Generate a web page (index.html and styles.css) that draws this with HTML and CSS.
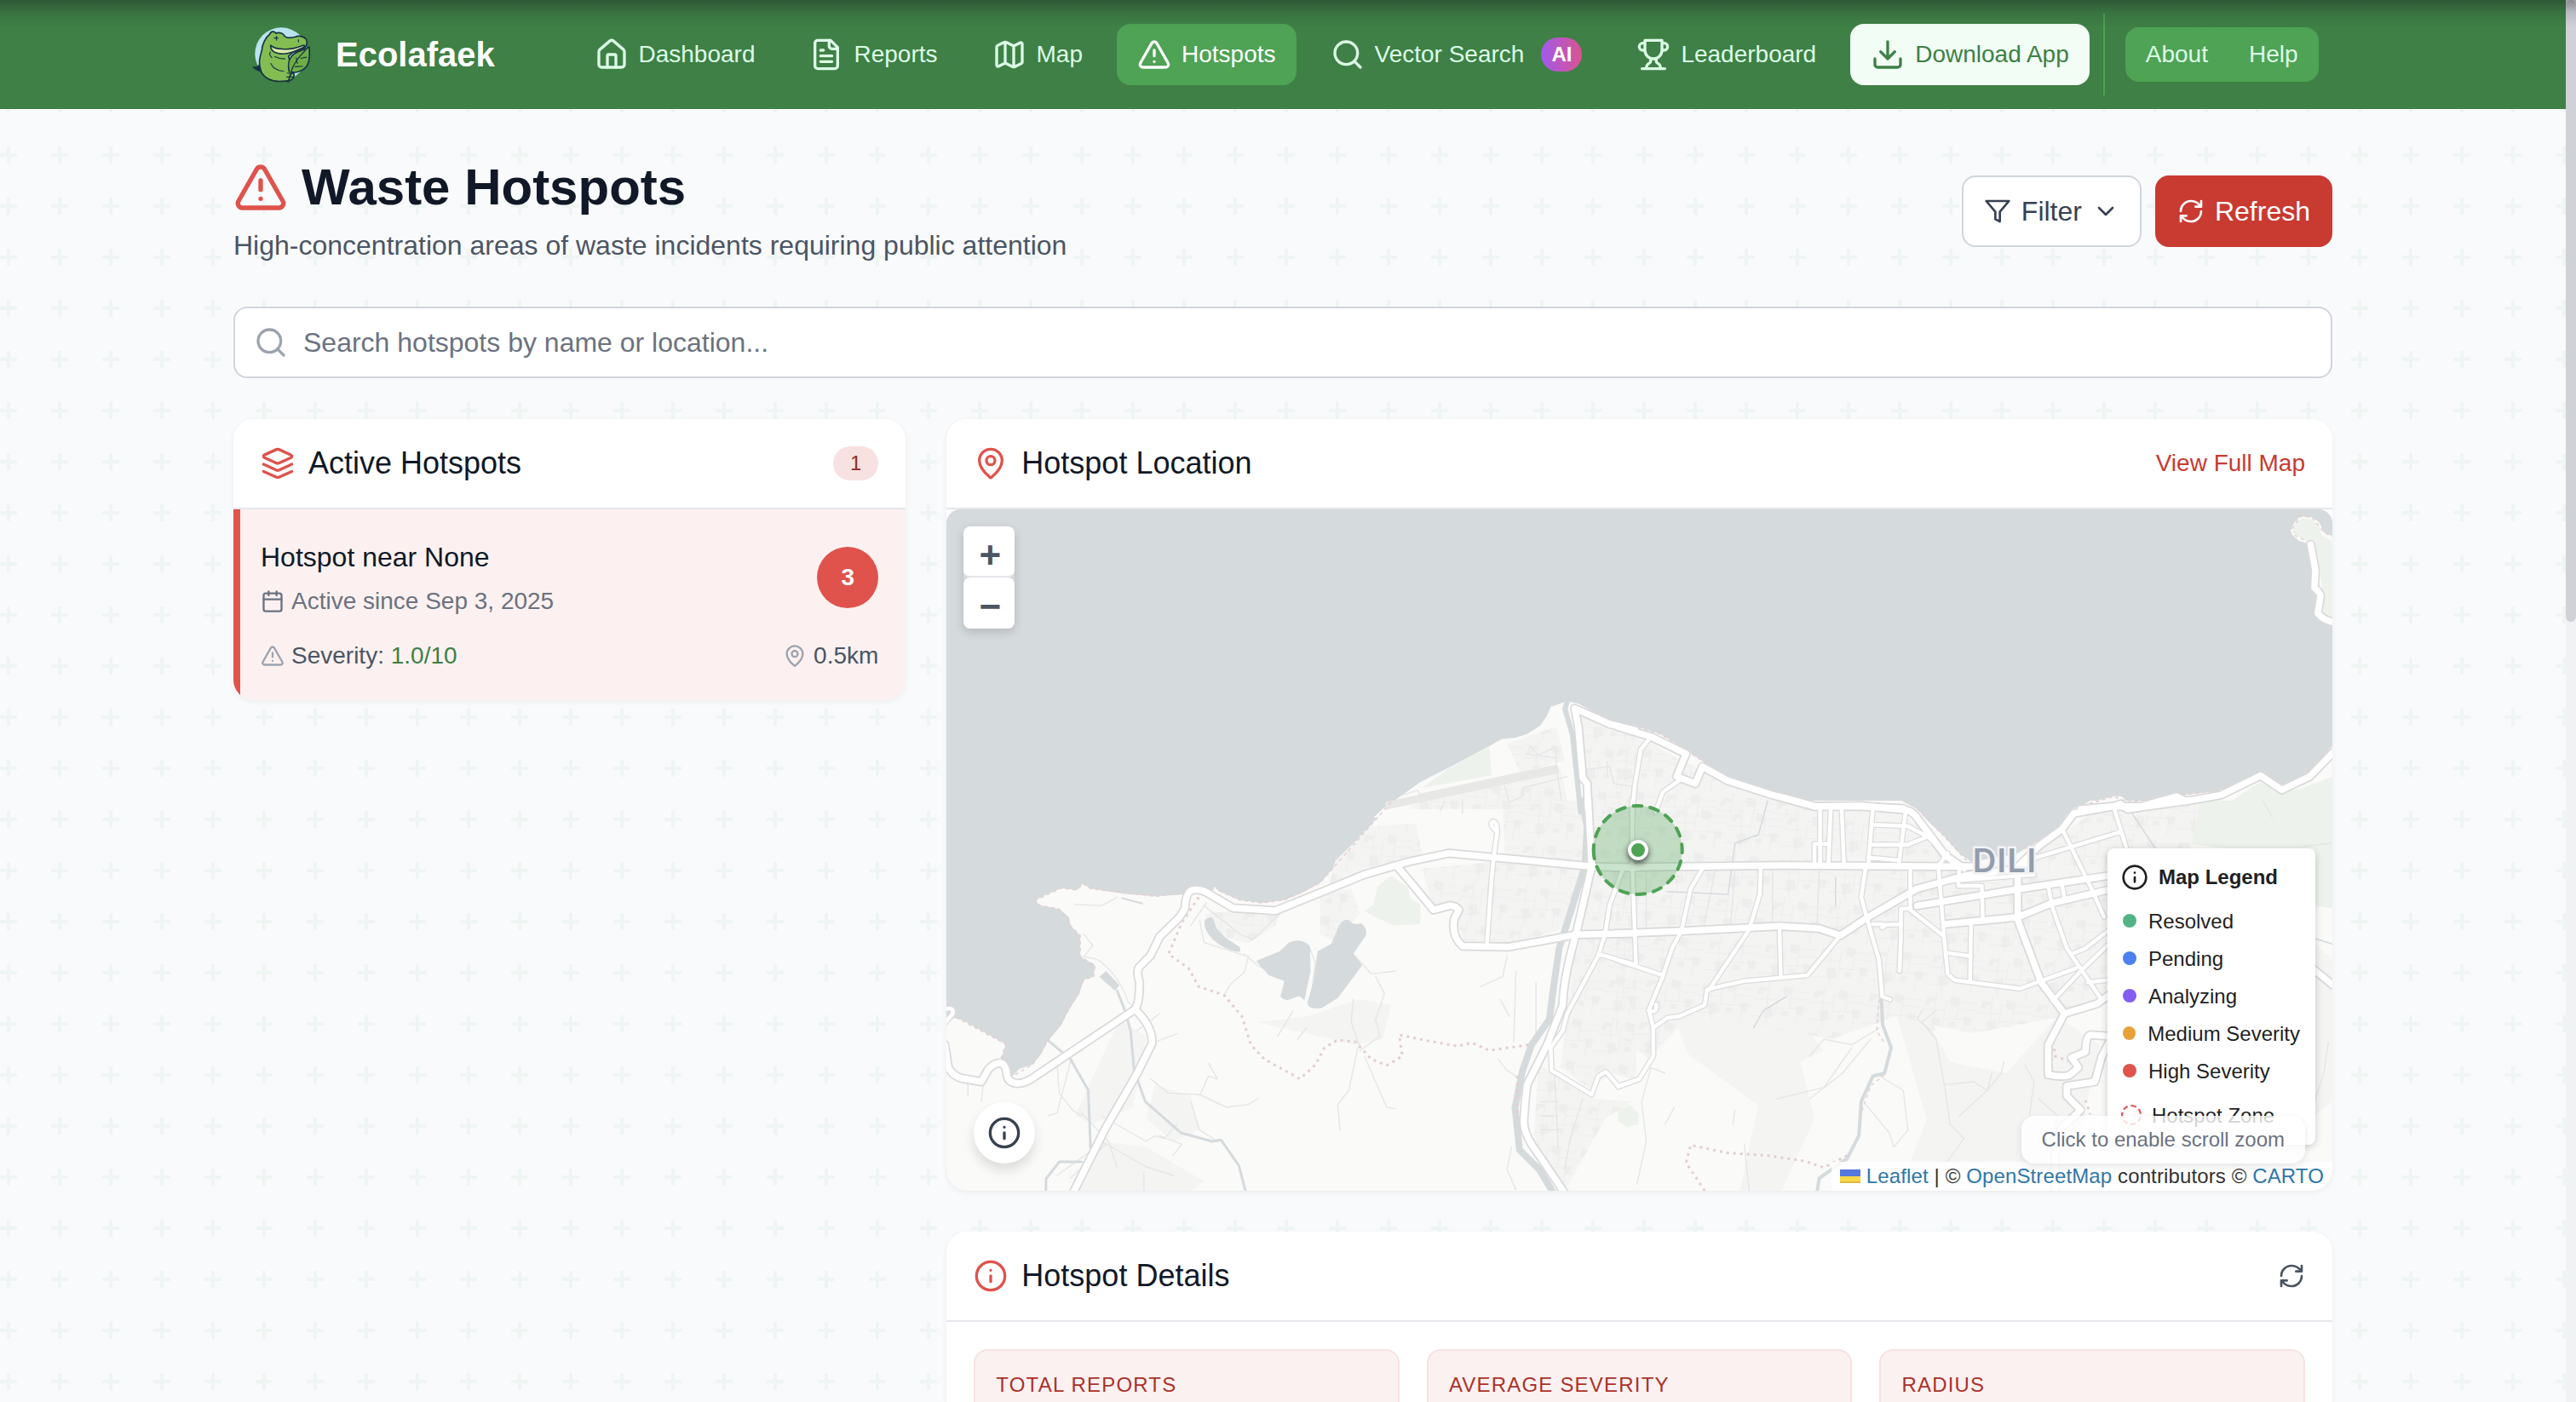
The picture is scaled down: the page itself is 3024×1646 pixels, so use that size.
FILE: index.html
```html
<!DOCTYPE html>
<html lang="en">
<head>
<meta charset="utf-8">
<title>Ecolafaek - Waste Hotspots</title>
<link rel="stylesheet" href="styles.css">
</head>
<body>
<svg class="sprite" aria-hidden="true">
  <symbol id="i-home" viewBox="0 0 24 24"><path d="M15 21v-8a1 1 0 0 0-1-1h-4a1 1 0 0 0-1 1v8"/><path d="M3 10a2 2 0 0 1 .709-1.528l7-5.999a2 2 0 0 1 2.582 0l7 5.999A2 2 0 0 1 21 10v9a2 2 0 0 1-2 2H5a2 2 0 0 1-2-2z"/></symbol>
  <symbol id="i-file" viewBox="0 0 24 24"><path d="M15 2H6a2 2 0 0 0-2 2v16a2 2 0 0 0 2 2h12a2 2 0 0 0 2-2V7Z"/><path d="M14 2v4a2 2 0 0 0 2 2h4M10 9H8M16 13H8M16 17H8"/></symbol>
  <symbol id="i-map" viewBox="0 0 24 24"><path d="M14.106 5.553a2 2 0 0 0 1.788 0l3.659-1.83A1 1 0 0 1 21 4.619v12.764a1 1 0 0 1-.553.894l-4.553 2.277a2 2 0 0 1-1.788 0l-4.212-2.106a2 2 0 0 0-1.788 0l-3.659 1.83A1 1 0 0 1 3 19.381V6.618a1 1 0 0 1 .553-.894l4.553-2.277a2 2 0 0 1 1.788 0zM15 5.764v15M9 3.236v15"/></symbol>
  <symbol id="i-alert" viewBox="0 0 24 24"><path d="m21.73 18-8-14a2 2 0 0 0-3.48 0l-8 14A2 2 0 0 0 4 21h16a2 2 0 0 0 1.73-3M12 9v4M12 17h.01"/></symbol>
  <symbol id="i-search" viewBox="0 0 24 24"><circle cx="11" cy="11" r="8"/><path d="m21 21-4.3-4.3"/></symbol>
  <symbol id="i-trophy" viewBox="0 0 24 24"><path d="M6 9H4.5a2.5 2.5 0 0 1 0-5H6M18 9h1.500a2.500 2.500 0 0 0 0-5H18M4 22h16M10 14.660V17c0 .550-.470.980-.970 1.210C7.850 18.750 7 20.240 7 22M14 14.660V17c0 .550.470.980.970 1.210C16.150 18.750 17 20.240 17 22M18 2H6v7a6 6 0 0 0 12 0V2Z"/></symbol>
  <symbol id="i-download" viewBox="0 0 24 24"><path d="M21 15v4a2 2 0 0 1-2 2H5a2 2 0 0 1-2-2v-4M7 10l5 5 5-5M12 15V3"/></symbol>
  <symbol id="i-filter" viewBox="0 0 24 24"><path d="M22 3H2l8 9.460V19l4 2v-8.540L22 3z"/></symbol>
  <symbol id="i-chevron" viewBox="0 0 24 24"><path d="m6 9 6 6 6-6"/></symbol>
  <symbol id="i-refresh" viewBox="0 0 24 24"><path d="M3 12a9 9 0 0 1 9-9 9.750 9.750 0 0 1 6.740 2.740L21 8M21 3v5h-5M21 12a9 9 0 0 1-9 9 9.750 9.750 0 0 1-6.740-2.740L3 16M8 16H3v5"/></symbol>
  <symbol id="i-layers" viewBox="0 0 24 24"><path d="m12.830 2.180a2 2 0 0 0-1.660 0L2.600 6.080a1 1 0 0 0 0 1.830l8.580 3.910a2 2 0 0 0 1.660 0l8.580-3.900a1 1 0 0 0 0-1.830ZM22 17.650l-9.170 4.160a2 2 0 0 1-1.660 0L2 17.650M22 12.650l-9.170 4.160a2 2 0 0 1-1.660 0L2 12.650"/></symbol>
  <symbol id="i-pin" viewBox="0 0 24 24"><path d="M20 10c0 4.993-5.539 10.193-7.399 11.799a1 1 0 0 1-1.202 0C9.539 20.193 4 14.993 4 10a8 8 0 0 1 16 0"/><circle cx="12" cy="10" r="3"/></symbol>
  <symbol id="i-calendar" viewBox="0 0 24 24"><path d="M8 2v4M16 2v4M3 10h18"/><rect x="3" y="4" width="18" height="18" rx="2"/></symbol>
  <symbol id="i-info" viewBox="0 0 24 24"><circle cx="12" cy="12" r="10"/><path d="M12 16v-4M12 8h.01"/></symbol>
</svg>

<header class="topbar">
  <div class="topbar-inner">
    <div class="brand">
      <svg class="brand-logo" viewBox="40 50 220 220">
        <circle cx="149" cy="156" r="93" fill="#b9e3ef"/>
        <path class="ink body" d="M50 203q15 4 22-8c-2-20 4-35 8-50 1-22 14-48 28-58 4-12 18-12 23-3 8-6 26-2 30 10 10 8 24 6 38 2 10-6 30-2 38 8 6 12 2 26-6 32l-42 16-14 12c6 20 2 34 4 48 12 4 18 14 14 26-4 14-20 14-38 15-36 3-64-10-78-34-8-3-18-7-27-16z"/>
        <path fill="#163244" d="M50 203q14 4 24-9l7 27q-18-4-31-18z"/>
        <path class="ink belly" d="M112 126c-2 16 10 28 36 30 26 2 52-10 82-24 4-8 0-6-6-5-26 11-48 14-70 12-18-1-32-2-42-13z"/>
        <path class="ink leaf" d="M178 222c-8-28-2-54 20-68 18-10 34-12 50-22 2 24 2 46-6 62-10 20-38 32-56 26l-14 38"/>
        <path class="line" d="M236 142c-20 20-44 48-52 76M206 190l-4-20M198 202l26-2M218 172l20-4M110 150c-4 6 0 14 6 20M112 190c8 18 24 26 46 28M126 166c12 6 24 8 36 8M170 224l22 2M168 238l22 0M132 94v14M124 100h14M210 106v8"/>
      </svg>
      <span class="brand-name">Ecolafaek</span>
    </div>
    <nav class="nav">
      <a class="nav-item"><svg class="ico ico-40"><use href="#i-home"/></svg>Dashboard</a>
      <a class="nav-item"><svg class="ico ico-40"><use href="#i-file"/></svg>Reports</a>
      <a class="nav-item"><svg class="ico ico-40"><use href="#i-map"/></svg>Map</a>
      <a class="nav-item active"><svg class="ico ico-40"><use href="#i-alert"/></svg>Hotspots</a>
      <a class="nav-item"><svg class="ico ico-40"><use href="#i-search"/></svg>Vector Search<span class="ai-badge">AI</span></a>
      <a class="nav-item"><svg class="ico ico-40"><use href="#i-trophy"/></svg>Leaderboard</a>
      <a class="nav-item download"><svg class="ico ico-40"><use href="#i-download"/></svg>Download App</a>
    </nav>
    <div class="nav-divider"></div>
    <div class="nav-secondary"><a>About</a><a>Help</a></div>
  </div>
</header>

<main class="page">
  <section class="page-head">
    <div>
      <h1><svg class="ico ico-64 red"><use href="#i-alert"/></svg>Waste Hotspots</h1>
      <p class="subtitle">High-concentration areas of waste incidents requiring public attention</p>
    </div>
    <div class="actions">
      <button class="btn btn-outline"><svg class="ico ico-32"><use href="#i-filter"/></svg>Filter<svg class="ico ico-32"><use href="#i-chevron"/></svg></button>
      <button class="btn btn-red"><svg class="ico ico-32"><use href="#i-refresh"/></svg>Refresh</button>
    </div>
  </section>

  <div class="search"><svg class="ico ico-40"><use href="#i-search"/></svg><span>Search hotspots by name or location...</span></div>

  <div class="columns">
    <section class="card">
      <div class="card-head">
        <h2><svg class="ico ico-40 red"><use href="#i-layers"/></svg>Active Hotspots</h2>
        <span class="count">1</span>
      </div>
      <div class="hotspot">
        <div class="hotspot-top">
          <div>
            <h3>Hotspot near None</h3>
            <p class="since"><svg class="ico ico-28"><use href="#i-calendar"/></svg>Active since Sep 3, 2025</p>
          </div>
          <span class="bubble">3</span>
        </div>
        <div class="hotspot-meta">
          <span class="meta"><svg class="ico ico-28"><use href="#i-alert"/></svg><span>Severity: <b>1.0/10</b></span></span>
          <span class="meta"><svg class="ico ico-28"><use href="#i-pin"/></svg>0.5km</span>
        </div>
      </div>
    </section>

    <div class="right-col">
      <section class="card">
        <div class="card-head">
          <h2><svg class="ico ico-40 red"><use href="#i-pin"/></svg>Hotspot Location</h2>
          <a class="full-map">View Full Map</a>
        </div>
        <div class="map">
          <svg class="map-canvas" viewBox="1111.3 598 1626.7 800" preserveAspectRatio="none">
            <defs>
              <pattern id="streets" width="120" height="150" patternUnits="userSpaceOnUse" patternTransform="rotate(6)">
                <path d="M10 20h18v14h-10v12h-12zM60 12l22 6-4 30-16-6zM92 80h20v30h-12zM24 92l20-6 6 34-18 10zM66 100h14v18h-14z" fill="#eeeeed"/>
                <path d="M0 62h52M30 0v62l8 88M52 30v90M52 30h68M80 30v60M52 90h68M100 90v60M0 122h38M80 55h40" fill="none" stroke="#e9eaea" stroke-width="1.6"/>
              </pattern>
              <g id="major">
                <g transform="translate(1100 940) scale(.523 .33333)">
                  <path d="M18 860l8 80q10 30 30 38l44 12 15-42q14-26 28-24 12 4 14 38 2 32 24 34 18 0 40-25L445 735q10-20 10-95-8-40 0-55l25-40 20-65 45-70 12-30q2-60 18-66 20-4 38 16l52 48 95 10 110-70 90-58 100-45 90-30 105 15 215 32 98 5"/>
                  <path d="M445 735q40 60 38 120l-33 105-70 190-75 234M1035 235l30 55 50 95 35-15q14-2 22 15l-10 30q-8 60 18 97l105 3 150-43 133-5M1410 1384l-40-94-35-80q-20-50-17-90 2-60 7-120l45-140 35-140q2-100 30-250l35-238-8-234"/>
                </g>
                <g transform="translate(1100 470) scale(.523 .33333)"><path d="M1462 1440l-2-90-10-20-10-180-8-65 78 55 58 22"/></g>
                <g transform="translate(1900 470) scale(.5485 .33333)">
                  <path d="M0 1150l70 35 75 60-20 80 40 25 15-60 55 50 95 50 90 40 100 0 90 8M990 1440l70-10h60l75-35 20 17 75-22 85-68 45 50 60-47 50-85"/>
                  <path d="M1482 508l10 92-2 60q14 20 13 30l-6 60q10 22 31 30"/>
                </g>
                <g transform="translate(1900 940) scale(.5485 .33333)">
                  <path d="M-5 235l355-7 405 4M-5 468l135-8 215-18 85 8 45 25 55-60 110-105 100-45 120-25M345-15l75 35 100-2 95 15q16 2 30 40l55 120 40 45M640 370l215-58 192-47M700 435l155-25 75-50 117-45"/>
                  <path d="M855 250v170l50 220 50 110 70-35 25-30M955 750l-35 110v105q25 10 45 3l20-28-15-35 30-20q0-60 12-60l45 5-22 70-15 90q-40 10-60 15v35l30 50-40 60-15 90v134M1485 590l45 60M845 250l55-90 50-60 25-55 85-25 15-8 15 18 130-30"/>
                </g>
              </g>
              <g id="minor">
                <g transform="translate(1100 940) scale(.523 .33333)"><path d="M1258 105q0-30-10-32-10 12 10 37l-8 90-5 80-10 220M1540 240l-30 130-10 100-15 75-70 205-10 60-27 60 2 80 90 85 15-65 17-15 28 50 38-20M1485 540l83 38M18 735q20-10 18 15l-16 30"/></g>
                <g transform="translate(1900 470) scale(.5485 .33333)"><path d="M70 1185l-22 45-13 130-5 100M130 1340l-35 40-15 70"/></g>
                <g transform="translate(1900 940) scale(.5485 .33333)">
                  <path d="M30 0v230l8 345M-5 560l100 55M180 240l-25 70-20 150-20 60-20 100-30 120q20 10 16-22M66 740l9 60v100l-30 80-45 28M75 800l30-35 25-5 55-40 5-55 80-30 135-20 70-140M305 240l-2 90-23 125-75 185-10 25M345 450l3 175M530 230l-10 110 15 90 23 130 7 130 17 10M432 20v195M455 20l-5 195M478 20l5 200M450 152h-30v63M545 25l-10 205M615 40l-15 190M545 85l75 5 45 40 35 60M545 155h75l45-30M535 200l65 10M545 435h20v12l8-10 32-2M625 240v140h-20v100l-3 120M625 385l70 90M705 185l-20 45 5 100 7 145 8 135 15 22 140 30 120-72M755 440l-2 190M700 535l55 13M778 300l2 110M730 240l-2 60h50M950 100l60 200 30 110M920 300l10 80 30 140 70 170M970 540l30-20 47-60M930 705l60-105 57-90M1005 640l42-8M865 240l30-40 180-90M1060 20l28 150M690 285l200-25M950 300l5 45"/>
                </g>
              </g>
            </defs>
            <rect x="1111" y="598" width="1628" height="800" fill="#d5dadd"/>
            <!-- land -->
            <g fill="#fafaf8">
              <path transform="translate(1100 470) scale(.523 .33333)" d="M980 1470l20-30 45-50 40-45 75-60 80-67 28-25 32-5 25-13 30-30 15-35 8-30 17-10 20-10 25 8 30 27 40 35 60 20v320z"/>
              <path transform="translate(1900 470) scale(.5485 .33333)" d="M-4 1130l44 20 50 25 40 40 35 40 25 25 50 50 90 55 80 35h70l60-2 60 20 40 12v20H-4zM955 1470l15-30 40-25 50-20h18l12 22 60-10 45-15 85-15 70-40 28-22 42 45 55-50 25-40 32-60v260zM1437 465l10-35 13-22 25 4 15 18 10 35 22 15v305l-31-20-6-15 8-60-13-30 2-60-10-92-25-13z"/>
              <path transform="translate(1100 940) scale(.523 .33333)" d="M1025 0l-25 40-25 45-25 40-20 40-25 45-25 45-20 35-40 35-40 25-50 10-50-10-30-20-20-15-5-15-5 12-60 18-70 7-70-9-75-18-17-18-13 23-35-7-40 27-18 15 8 18 45 14 22 28 3 30 22 35v75l33 30-3 40-22 10-10 50-25 60-15 50-30 55-15 45-20 40-30 15-15 25-25-65 10-47-55-48-40-35-20-10-10 10-18 0v620h1570V0z"/>
              <path transform="translate(1900 940) scale(.5485 .33333)" d="M-4 0h610l34 30 25 45 35 55 30 55 25 30 95-25 25-25 35-35 35-35 25-55 40-40h520v1380H-4z"/>
            </g>
            <!-- parks -->
            <g fill="#edf2ec">
              <path transform="translate(1100 470) scale(.523 .33333)" d="M1240 1220l6 100-156 45 60-70z"/>
              <path transform="translate(1900 470) scale(.5485 .33333)" d="M1441 465l8-32 15-18 20 4 14 18 8 40 22 18v280l-26-20-2-15 8-60-8-90-15-85zM1330 1390l45-45 40 40 50-20 63-40v130h-240z"/>
              <path transform="translate(1100 940) scale(.523 .33333)" d="M990 300l30-35 38 40 5 40 22 20v70l-60 5-65-50 20-25zM1555 1080l20 20v40l-25 10-20-30zM1000 160l18-8v45l-16 4z"/>
              <path transform="translate(1900 940) scale(.5485 .33333)" d="M1240 0h290v380l-40-10V168h-190l-80-15-15-100zM315 350l70-18v40l-35 40-35-10zM640 750l30 20 10 40-35-6zM0 1090l25-20 20 40-25 40-20-20z"/>
            </g>
            <!-- built-up areas -->
            <g fill="#f4f4f3">
              <g transform="translate(1100 940) scale(.523 .33333)">
                <path id="u1" d="M895 210l80-120 100-10 15 110-60 40-110 50-40 15zM1090 240l160-25 200 30-30 200-130 60-105 0-25-120-45 5zM1270 0h180l15 220-190-30zM1475 0h95v980l-60-20-40 60-70-80zM1350 930l70 60 60 60 80 10-60 60-90 254-70-170zM860 330l70-20 20 90-60 90-30-20zM600 400l50-10 120 10-10 40-60 60-60-20z"/>
                <path d="M410 770l60 60-30 250-90 60-40-30zM720 780l110-20 120-60 70 20-20 120-60 20zM370 1200l100 20 130 120-30 34H310zM490 1000l80 40 20 120-60 40-60-80z"/>
              </g>
              <path id="u2" transform="translate(1900 940) scale(.5485 .33333)" d="M-5 0h350l260 40 60 90 90 110 110-30 180-200h200l-20 160 260 30-440 200v300l-90 60-200 60-160-60-140 80-200-60-110-10-80 140-70-90z"/>
              <path id="u3" transform="translate(1100 470) scale(.523 .33333)" d="M1440 1100l70 50 60 20v300h-105zM1280 1210l110-60 20 120-100 40zM1070 1420l330-120 20 140H1060z"/>
              <path id="u4" transform="translate(1900 470) scale(.5485 .33333)" d="M-5 1160l70 40 60 60 50 40 70 50 160 80v40H-5z"/>
              <path transform="translate(1900 940) scale(.5485 .33333)" d="M100 680l100 20 180 60 60 120-50 40 30 200-70 254h-90l40-300-150-180zM590 720l60 20 60 180 120 40 110-200 90 100-40 300-150 214H600l60-250zM1490 500l38 60v500l-38 50z"/>
            </g>
            <g fill="url(#streets)"><use href="#u1" transform="translate(1100 940) scale(.523 .33333)"/><use href="#u2"/><use href="#u3"/><use href="#u4"/></g>
            <path d="M1627 946l203-43" stroke="#e8e8e6" stroke-width="9"/>
            <!-- lanes and tracks -->
            <g class="ns lane">
              <g transform="translate(1100 470) scale(.523 .33333)"><path d="M1045 1390l35-17 3 15 307-103 12 120M1275 1360l10 55 30-20v-30l100-40M1330 1215l20 35 40-30v60M1322 1245l70 15M1180 1405v50M1140 1415l-10 30M1460 1300l50-10 10 60 40 10M1505 1270v50"/></g>
              <g transform="translate(1100 940) scale(.523 .33333)"><path d="M325 550q30 0 45 20 40 50 60 140l15 20M310 365l60 5 35-30M330 470l20 40-20 40M600 370l80 100 30 20 60-90M605 360l-35 80M690 540l30 40 70 60M700 545l-10 60-30 40-15 40M590 420l10 80 90 45M835 510l15 60-10 120M935 540l40 70 55-10M985 620l20 60-20 90 10 60-45 50M800 740l-35 90M935 700l-5 80 20 90M830 800l-20 40M945 870l-20 150-25 50 5 90M960 900l50 180 20 5M1280 550l-10 70-50 35M1300 600l-5 250M1265 700l20 60M1345 640v200M480 980l40 50 70 5M590 1040l20-70 20 10-20-55M590 1035l60 45 50-10 20-20M570 1060l20 100 40 40M270 930l5 100 30 60 20 20M300 920l-30 180-20 10M325 1100l60 100 20 90M370 1200l100 90 60 30M500 1180l50 30-20 40M540 1140l-30 50-20-10-20 20-100-90M380 1210l-80 120M465 1310v64M350 1230l-80 90M1260 910l20 40 20 20M1290 1220l-10 80 20 70M1450 1050l-30 150-10 100M1385 920l10 300M1355 1060h40M1355 1110h40M1355 1160h40M70 1000v40M105 990l-5 70M500 750l-50 60M540 820l-50 30"/></g>
              <g transform="translate(1900 940) scale(.5485 .33333)"><path d="M680 740l-30 40 30 60 20 180 10 120 30 50-40 90M650 740l-10 30 30 40M700 1000l60-10 30 30 30-60 5-40M560 800l-60 60-60-20-30 60M540 840l-60 120-70 90M500 870l-60 140-100 40M550 960l60 60 10 140-30 60-10-50-50-100M800 960l-10 60-60 90M870 930l20 60-10 120M900 1050l40 60-20 120M930 1240l-40-40M1490 1060l20-100 10-110M250 1090l-5 50M270 1210l10 164M100 960l-30-20-20 120 10 140-20 150M120 1080l-20 60M1528 150l-60 10M1380 0l20 60M430 240l-5 210M60 230v230M210 230l-30 230M250 250l-10 200M330 230v220"/></g>
            </g>
            <!-- lakes, rivers, salt ponds -->
            <g fill="#d5dadd" transform="translate(1100 940) scale(.523 .33333)">
              <path d="M602 420q10-14 18-6l8 36 22 35 30 30q4 14-2 18-30-4-58-43-24-40-18-70zM717 565l53-35 20-30q14-12 30-5 18 8 18 30l1 75-14 105q-10-24-20-12l-18 10q-20-8-14-22l7-46-35-20zM855 530l30-25q6-20 15-55 10-36 25-30 8 20 28 12 14 18 10 43l-28 65 20 40-55 115-35 35q-34 8-33-20l13-70zM365 620l15-20 30 50-10 20zM415 340l48 20v6l-48-20z"/>
            </g>
            <g class="ns river">
              <path transform="translate(1100 470) scale(.523 .33333)" stroke-width="6" d="M1415 1062l-5 25 17 93 8 120 10 150"/>
              <path transform="translate(1100 940) scale(.523 .33333)" stroke-width="8" d="M1447 0l13 90-5 140-20 100-20 100-18 90-12 130-10 120-40 90-20 90-17 130 10 150 45 70 32 84"/>
              <path transform="translate(1100 940) scale(.523 .33333)" stroke-width="3" d="M250 845l50 65 40 110 5 200M405 670l15 60 15 80 8 140 25 110 80 110 70 30 20-5 40 90 15 90M325 1272h-50l-30 60v50"/>
              <path transform="translate(1900 940) scale(.5485 .33333)" stroke-width="4" d="M563 700l3 90 18 80-14 90-25 10-25 90-5 120-25 80-60 70-5 54"/>
              <path transform="translate(1900 940) scale(.5485 .33333)" stroke-width="1.5" d="M320 0l-20 120-50 30-15 180-130-10M465 270v100M1090 20l60 150M1490 485l38 20M360 690l-50 50-20 60"/>
            </g>
            <!-- district boundaries and coast -->
            <g class="ns boundary">
              <path transform="translate(1100 940) scale(.523 .33333)" d="M588 340l-38 90-30 110 45 50 23 65 57 30 40 75 20 100 30 50 80 70 35-50 20-60 30-27 40 7 35 60 35 22 35-32-7-75 62 20 70 20 30-13 40 28 88-20M1303 970v150"/>
              <path transform="translate(1900 940) scale(.5485 .33333)" d="M185 1374l-40-99 10-62 75 27 90 10 80 20 40 22 50-42M930 850l5 50 35 20M1000 1055l10 50"/>
            </g>
            <g class="ns coast">
              <path transform="translate(1100 940) scale(.523 .33333)" d="M1020 5l-45 80-70 125-45 80-80 60-50 10-50-10-50-35-5-15-5 12-130 25-145-27-17-18-13 23-35-7-58 42 8 18 45 14 25 58 22 35v75l33 30-3 40-22 10-35 110-45 105-35 85-45 40-25-65 10-47-110-93"/>
              <path transform="translate(1900 940) scale(.5485 .33333)" d="M420 8h120M640 30l60 100 45 80M870 170l75-75 30-60 40-30M558 700l-5 110 15 40M570 965l-30 40-25 120"/>
              <path transform="translate(1900 470) scale(.5485 .33333)" d="M0 1132l90 43 100 105M980 1435l80-40 30 20 190-40 110-60M1425 1358l50-48 53-95M1480 503l-43-38 23-57 25 4 25 53 18 15"/>
            </g>
            <use href="#minor" class="ns case-minor"/><use href="#major" class="ns case-major"/>
            <use href="#minor" class="ns fill-minor"/><use href="#major" class="ns fill-major"/>
            <text class="city" x="2316" y="1024">DILI</text>
            <!-- hotspot zone -->
            <path d="M1871 998a52 52 0 1 0 104 0a52 52 0 1 0 -104 0" fill="#4ea355" fill-opacity=".3" stroke="#4ea355" stroke-width="4" stroke-linecap="round" stroke-dasharray="10 10"/>
          </svg>
          <span class="marker"></span>
          <div class="zoom"><a>+</a><a>−</a></div>
          <button class="info-btn"><svg class="ico ico-40"><use href="#i-info"/></svg></button>
          <div class="legend">
            <h4><svg class="ico ico-32"><use href="#i-info"/></svg>Map Legend</h4>
            <p><i class="dot resolved"></i>Resolved</p>
            <p><i class="dot pending"></i>Pending</p>
            <p><i class="dot analyzing"></i>Analyzing</p>
            <p><i class="dot medium"></i>Medium Severity</p>
            <p><i class="dot high"></i>High Severity</p>
            <p class="zone"><i class="ring"></i>Hotspot Zone</p>
          </div>
          <div class="attribution"><svg class="flag" viewBox="0 0 12 8"><path fill="#5578dc" d="M0 0h12v4H0z"/><path fill="#f8d848" d="M0 4h12v3H0z"/><path fill="#dcb93c" d="M0 7h12v1H0z"/></svg> <a>Leaflet</a> | © <a>OpenStreetMap</a> contributors © <a>CARTO</a></div>
          <div class="scroll-hint">Click to enable scroll zoom</div>
        </div>
      </section>

      <section class="card details">
        <div class="card-head">
          <h2><svg class="ico ico-40 red"><use href="#i-info"/></svg>Hotspot Details</h2>
          <svg class="ico ico-32 slate"><use href="#i-refresh"/></svg>
        </div>
        <div class="stats">
          <div class="stat">Total Reports</div>
          <div class="stat">Average Severity</div>
          <div class="stat">Radius</div>
        </div>
      </section>
    </div>
  </div>
</main>
<div class="scrollbar"><div class="scrollbar-thumb"></div></div>
<div class="top-shade"></div>
</body>
</html>
```
FILE: styles.css
```css
* { box-sizing: border-box; margin: 0; padding: 0; }
html { height: 1646px; overflow: hidden; }
body {
  position: relative;
  display: flow-root;
  height: 1646px;
  overflow: hidden;
  font-family: "Liberation Sans", Arial, sans-serif;
  font-size: 32px;
  line-height: 48px;
  color: #111827;
  background: #f9fafc url("data:image/svg+xml,%3Csvg xmlns='http://www.w3.org/2000/svg' width='60' height='60'%3E%3Cpath fill='%23eef5f3' d='M8 0h4v8h8v4h-8v8H8v-8H0V8h8z'/%3E%3C/svg%3E") 0 52px;
}
h1, h2, h3, h4 { font-weight: 400; }
.sprite { position: absolute; width: 0; height: 0; }
.ico { flex: none; fill: none; stroke: currentColor; stroke-width: 2; stroke-linecap: round; stroke-linejoin: round; }
.ico-28 { width: 28px; height: 28px; }
.ico-32 { width: 32px; height: 32px; }
.ico-40 { width: 40px; height: 40px; }
.ico-64 { width: 64px; height: 64px; }
.red { color: #df534c; }
.slate { color: #4b5563; }

/* top bar */
.topbar { width: 3012px; height: 128px; background: #3e8045; color: #dcfce7; }
.topbar-inner { display: flex; align-items: center; height: 128px; padding-left: 294px; font-size: 28px; line-height: 40px; }
.brand { display: flex; align-items: center; gap: 27px; width: 379.5px; }
.brand-logo { width: 73px; height: 73px; }
.brand-logo .ink { stroke: #163244; stroke-width: 5; stroke-linejoin: round; }
.brand-logo .body { fill: #84bd52; }
.brand-logo .belly { fill: #dcebaa; }
.brand-logo .leaf { fill: #6fae46; }
.brand-logo .line { fill: none; stroke: #163244; stroke-width: 3.5; stroke-linecap: round; }
.brand-name { font-size: 40px; font-weight: 700; color: #fff; }
.nav { display: flex; gap: 16px; }
.nav-item { display: flex; align-items: center; gap: 12px; height: 72px; padding: 0 24px; border-radius: 16px; white-space: nowrap; }
.nav-item.active { background: #4ea355; color: #fff; }
.nav-item.download { background: #f2fdf5; color: #3e8045; }
.ai-badge { margin-left: 8px; padding: 0 12px; border-radius: 20px; font-size: 24px; font-weight: 700; color: #fff; background: linear-gradient(90deg, #a259ec, #d9548f); }
.nav-divider { width: 2px; height: 96px; margin: 0 24px 0 16px; background: #4ea355; }
.nav-secondary { display: flex; gap: 48px; height: 64px; align-items: center; padding: 0 24px; border-radius: 16px; background: #4ea355; }
.top-shade { position: absolute; left: 0; top: 0; width: 100%; height: 32px; background: linear-gradient(rgba(20, 20, 30, .38), rgba(20, 20, 30, .12) 45%, rgba(20, 20, 30, 0)); }

/* page heading */
.page { width: 3012px; padding: 56px 274px 0; }
.page-head { display: flex; justify-content: space-between; align-items: center; height: 128px; }
h1 { display: flex; align-items: center; gap: 16px; font-size: 60px; line-height: 72px; font-weight: 700; }
.subtitle { margin-top: 8px; color: #4b5563; }
.actions { display: flex; gap: 16px; }
.btn { display: flex; align-items: center; gap: 12px; height: 84px; padding: 0 24px; border: 2px solid #d1d5db; border-radius: 16px; font: inherit; }
.btn-outline { background: #fff; color: #374151; }
.btn-red { background: #c93a31; border-color: #c93a31; color: #fff; }
.search { display: flex; align-items: center; gap: 18px; height: 84px; margin-top: 48px; padding-left: 22px; border: 2px solid #d1d5db; border-radius: 16px; background: #fff; color: #6b7280; }
.search .ico { color: #9ca3af; }

/* cards */
.columns { display: grid; grid-template-columns: 789.33px 1fr; gap: 48px; align-items: start; margin-top: 48px; }
.right-col { display: grid; gap: 48px; }
.card { overflow: hidden; border-radius: 24px; background: #fff; box-shadow: 0 2px 6px rgba(0, 0, 0, .06); }
.details { border-radius: 24px 24px 0 0; }
.card-head { display: flex; justify-content: space-between; align-items: center; height: 106px; padding: 0 32px; border-bottom: 2px solid #e5e7eb; }
h2 { display: flex; align-items: center; gap: 16px; font-size: 36px; line-height: 56px; }
.count { padding: 0 20px; border-radius: 20px; background: #f8e1e1; color: #8c2f28; font-size: 24px; line-height: 40px; }
.hotspot { padding: 32px 32px 32px 24px; border-left: 8px solid #df534c; background: #fcf1f0; font-size: 28px; line-height: 40px; }
.hotspot-top, .hotspot-meta { display: flex; justify-content: space-between; align-items: center; }
.hotspot-meta { margin-top: 24px; color: #4b5563; }
.hotspot-meta .ico { color: #9ca3af; }
.hotspot-meta b { font-weight: 400; color: #3e8045; }
h3 { font-size: 32px; line-height: 48px; }
.since { display: flex; align-items: center; gap: 8px; margin-top: 8px; color: #6b7280; }
.meta { display: flex; align-items: center; gap: 8px; }
.bubble { width: 72px; height: 72px; border-radius: 50%; background: #df534c; color: #fff; font-weight: 700; line-height: 72px; text-align: center; }
.full-map { font-size: 28px; color: #c93a31; }

/* map */
.map { position: relative; height: 800px; overflow: hidden; border-radius: 16px 16px 24px 24px; font-size: 24px; line-height: 32px; }
.map-canvas { display: block; width: 100%; height: 800px; }
.ns { fill: none; stroke-linecap: round; stroke-linejoin: round; }
.map-canvas path { vector-effect: non-scaling-stroke; }
.lane { stroke: #e5e6e6; stroke-width: 1.4; }
.river { stroke: #d5dadd; }
.boundary { stroke: #e3cdd0; stroke-width: 3; stroke-dasharray: 3 5; stroke-linecap: butt; }
.coast { stroke: #e6cfd1; stroke-width: 1.5; stroke-dasharray: 4 4; stroke-linecap: butt; }
.case-minor { stroke: #dcdcdc; stroke-width: 7; }
.case-major { stroke: #dadada; stroke-width: 11; }
.fill-minor { stroke: #fff; stroke-width: 4.5; }
.fill-major { stroke: #fff; stroke-width: 7.5; }
.city { font: 600 38px Inter, sans-serif; letter-spacing: 1.5px; fill: #929dab; stroke: #f2f3f4; stroke-width: 5; paint-order: stroke; }
.marker { position: absolute; left: 799.7px; top: 388px; width: 24px; height: 24px; border: 4px solid #fff; border-radius: 50%; background: #4ea355; box-shadow: 0 3px 7px rgba(0, 0, 0, .7); }
.zoom { position: absolute; left: 20px; top: 20px; width: 60px; border-radius: 8px; box-shadow: 0 4px 12px rgba(0, 0, 0, .16); }
.zoom a { display: block; height: 60px; padding-top: 3px; border-radius: 8px; background: #fff; color: #4b5563; font-size: 44px; font-weight: 700; line-height: 62px; text-align: center; text-indent: 2px; }
.zoom a:first-child { border-bottom: 2px solid #e5e7eb; }
.info-btn { position: absolute; left: 32px; bottom: 32px; display: grid; place-items: center; width: 72px; height: 72px; border: 0; border-radius: 50%; background: #fff; color: #374151; box-shadow: 0 8px 14px rgba(0, 0, 0, .12); }
.legend { position: absolute; right: 20px; bottom: 54px; width: 244px; height: 348px; padding: 16px 18px; border-radius: 8px; background: #fff; color: #1f1f1f; white-space: nowrap; box-shadow: 0 2px 10px rgba(0, 0, 0, .2); }
.legend h4 { display: flex; align-items: center; gap: 12px; height: 36px; margin: 0 0 17px -2px; font-size: 24px; font-weight: 700; }
.legend p { display: flex; align-items: center; gap: 14px; height: 32px; margin-bottom: 12px; padding-top: 2px; }
.legend .zone { gap: 12px; margin: 20px 0 0 -2px; }
.dot { width: 16px; height: 16px; margin-top: -3px; border-radius: 50%; }
.ring { width: 24px; height: 24px; margin-top: -3px; border: 2px dashed #df534c; border-radius: 50%; }
.resolved { background: #52b485; }
.pending { background: #4c80ee; }
.analyzing { background: #845ef0; }
.medium { background: #e8a13a; }
.high { background: #df534c; }
.attribution { position: absolute; right: 0; bottom: 0; height: 34px; padding: 0 10px; background: rgba(255, 255, 255, .8); color: #333; line-height: 34px; letter-spacing: .12px; white-space: nowrap; }
.attribution a { color: #2f77a8; }
.flag { width: 24px; height: 16px; }
.scroll-hint { position: absolute; right: 32px; bottom: 32px; height: 56px; padding: 0 24px; border-radius: 16px; background: rgba(255, 255, 255, .8); color: #6b7280; line-height: 56px; box-shadow: 0 3px 8px rgba(0, 0, 0, .1); }

/* details */
.stats { display: grid; grid-template-columns: repeat(3, 1fr); gap: 32px; padding: 32px 32px 0; }
.stat { height: 62px; padding: 24px 24px 0; border: 2px solid #f8e1e1; border-bottom: 0; border-radius: 16px 16px 0 0; background: #fcf1f1; color: #ab3129; font-size: 24px; line-height: 32px; letter-spacing: 1.2px; text-transform: uppercase; }

/* page scrollbar */
.scrollbar { position: absolute; right: 0; top: 0; width: 12px; height: 1646px; background: #f1f2f4; }
.scrollbar-thumb { height: 730px; border-radius: 6px; background: #d0d2d8; }
```
